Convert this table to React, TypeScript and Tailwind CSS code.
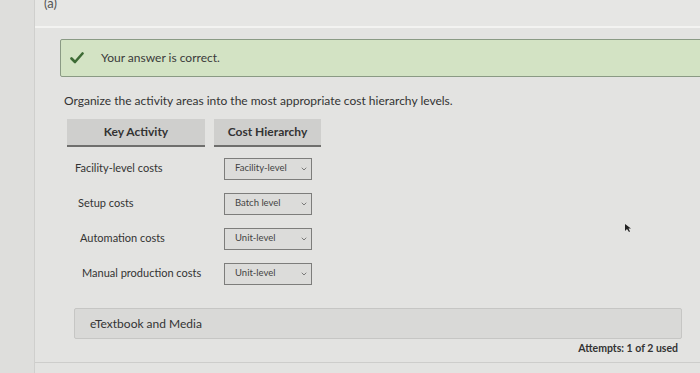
import { ChevronDown } from 'lucide-react';

export default function App() {
  const rows = [
    { activity: 'Facility-level costs', level: 'Facility-level', pad: 'pl-[8px]' },
    { activity: 'Setup costs', level: 'Batch level', pad: 'pl-[11px]' },
    { activity: 'Automation costs', level: 'Unit-level', pad: 'pl-[13px]' },
    { activity: 'Manual production costs', level: 'Unit-level', pad: 'pl-[15px]' },
  ];

  return (
    <div className="relative w-[700px] h-[373px] overflow-hidden bg-[#e3e3e1] text-[#333] flex" style={{ fontFamily: 'Lato, "Liberation Sans", sans-serif' }}>
      {/* left gutter */}
      <div className="w-[35px] shrink-0 bg-[#dededc] border-r border-[#cfcfcd]" />

      <div className="flex-1 flex flex-col">
        {/* part label */}
        <div className="h-[28px] shrink-0 flex items-start border-b-2 border-[#f3f3f1] bg-[#e6e6e4] pl-[9px] text-[13px] leading-[16px] text-[#555]">
          <span className="-mt-[5px]">(a)</span>
        </div>

        <div className="flex-1 flex flex-col pl-[25px] pt-[11px] border-b border-[#cdcdcb] mb-[10px]">
          {/* feedback */}
          <div className="h-[38px] -mr-[2px] flex items-center bg-[#d3e3c4] border border-[#8a9a84] rounded-l-[2px]">
            <svg width="14" height="12" viewBox="0 0 14 12" className="ml-[9px]">
              <path d="M1.5 6.5 L5 10 L12.5 1.5" fill="none" stroke="#3d6b35" strokeWidth="2.6" strokeLinecap="round" strokeLinejoin="round" />
            </svg>
            <span className="ml-[17px] text-[12px] text-[#3a3a3a]">Your answer is correct.</span>
          </div>

          <p className="mt-[15px] ml-[4px] text-[12px] text-[#333]">
            Organize the activity areas into the most appropriate cost hierarchy levels.
          </p>

          {/* table */}
          <div className="mt-[9px] ml-[7px] flex flex-col w-[254px]">
            <div className="flex gap-[9px]">
              <div className="w-[138px] h-[28px] bg-[#cfcfcd] border-b-2 border-[#6f6f6d] flex items-center justify-center text-[12px] font-bold text-[#333]">
                Key Activity
              </div>
              <div className="w-[107px] h-[28px] bg-[#cfcfcd] border-b-2 border-[#6f6f6d] flex items-center justify-center text-[12px] font-bold text-[#333]">
                Cost Hierarchy
              </div>
            </div>

            <div className="flex flex-col gap-[12px] mt-[10px]">
              {rows.map((r, i) => (
                <div key={i} className="flex items-center h-[23px]">
                  <div className={`w-[157px] text-[11px] text-[#333] ${r.pad}`}>{r.activity}</div>
                  <div className="w-[88px] h-[22px] bg-[#dcdcda] border border-[#7d7d7b] flex items-center justify-between pl-[10px] pr-[3px]">
                    <span className="text-[9.5px] text-[#444]">{r.level}</span>
                    <ChevronDown className="w-[8px] h-[8px] text-[#666]" strokeWidth={2.5} />
                  </div>
                </div>
              ))}
            </div>
          </div>

          {/* media */}
          <div className="mt-[23px] ml-[14px] mr-[18px] h-[31px] bg-[#d9d9d7] border border-[#c6c6c4] rounded-[2px] flex items-center pl-[15px] text-[12px] text-[#333]">
            eTextbook and Media
          </div>

          <div className="mt-[2px] mr-[22px] text-right text-[10.5px] font-bold text-[#333]">
            Attempts: 1 of 2 used
          </div>
        </div>
      </div>

      {/* cursor */}
      <svg width="8" height="10" viewBox="0 0 8 10" className="absolute left-[624px] top-[223px]">
        <path d="M1 1 L1 8 L3 6 L5 9 L6 8.5 L4.5 5.5 L7 5.5 Z" fill="#222" />
      </svg>
    </div>
  );
}
